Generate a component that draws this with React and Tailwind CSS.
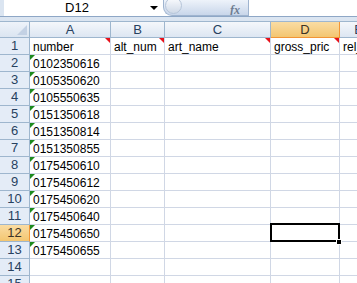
import React from 'react';

const cols = [
  { key: 'A', w: 'w-[81px]' },
  { key: 'B', w: 'w-[54px]' },
  { key: 'C', w: 'w-[106px]' },
  { key: 'D', w: 'w-[69px]' },
  { key: 'E', w: 'w-[38px]' },
  { key: 'F', w: 'w-[64px]' },
];

const numbers = [
  '0102350616', '0105350620', '0105550635', '0151350618', '0151350814', '0151350855',
  '0175450610', '0175450612', '0175450620', '0175450640', '0175450650', '0175450655',
];

const headerRow = { A: 'number', B: 'alt_num', C: 'art_name', D: 'gross_pric', E: 'rel_price' };

function GreenMark() {
  return <span className="absolute left-0 top-0 w-0 h-0 border-t-[5px] border-r-[5px] border-t-[#1d8a1d] border-r-transparent" />;
}

function RedMark() {
  return <span className="absolute right-0 top-0 w-0 h-0 border-t-[5px] border-l-[5px] border-t-[#e8101a] border-l-transparent" />;
}

function Cell({ col, row, children }) {
  const selected = col.key === 'D' && row === 12;
  return (
    <div className={`${col.w} relative shrink-0 h-full border-r border-[#d0d7e5]`}>
      <div className="h-full overflow-hidden whitespace-nowrap pl-[3px] text-[12px] leading-[16px] text-black pt-px">
        {children}
      </div>
      {selected && (
        <>
          <div className="absolute left-[-1px] top-[-2px] w-[70px] h-[19px] border-2 border-black z-10" />
          <div className="absolute left-[65px] top-[14px] w-[6px] h-[6px] bg-black border border-white z-20" />
        </>
      )}
    </div>
  );
}

export default function App() {
  const rows = Array.from({ length: 15 }, (_, i) => i + 1);

  return (
    <div className="w-[357px] h-[283px] overflow-hidden bg-white font-['Liberation_Sans',Arial,sans-serif]">
      {/* name box + formula bar */}
      <div className="flex h-[16px]">
        <div className="w-[4px] bg-[#dbe5f1] shrink-0" />
        <div className="w-[159px] shrink-0 bg-white flex items-center">
          <span className="flex-1 text-center text-[13px] leading-[16px] text-black">D12</span>
          <span className="w-0 h-0 mr-[5px] border-t-[4px] border-l-[4px] border-r-[4px] border-t-black border-l-transparent border-r-transparent" />
        </div>
        <div className="w-[85px] shrink-0 rounded-bl-[9px] bg-linear-to-b from-[#eef3fa] to-[#c8d6ea] border-b border-l border-[#9fb4cf] flex items-start overflow-hidden">
          <span className="ml-[1px] mt-[-3px] w-[17px] h-[17px] rounded-full bg-linear-to-b from-[#fbfcfe] to-[#cfd9e7] border border-[#b5c4d8]" />
          <span className="ml-auto mr-[8px] mt-[1px] text-[12px] italic font-bold font-['Liberation_Serif',serif] text-[#6e7d91]">fx</span>
        </div>
        <div className="flex-1 bg-white border-l border-[#9fb4cf]" />
      </div>
      <div className="h-px bg-[#8ea7c6]" />
      <div className="h-[4px] bg-[#dbe5f1]" />

      {/* column headers */}
      <div className="flex h-[17px] border-t border-[#9eb6ce]">
        <div className="w-[30px] shrink-0 relative bg-linear-to-b from-[#eef3fa] to-[#dbe5f1] border-r border-b border-[#9eb6ce]">
          <span className="absolute right-[2px] bottom-[2px] w-0 h-0 border-b-[10px] border-l-[10px] border-b-[#c3d1e4] border-l-transparent" />
        </div>
        {cols.map((c) => (
          <div
            key={c.key}
            className={`${c.w} shrink-0 flex items-center justify-center text-[13px] leading-[16px] border-r border-b ${
              c.key === 'D'
                ? 'bg-linear-to-b from-[#fadca3] to-[#f3c670] border-[#f29536] text-[#3b3226]'
                : 'bg-linear-to-b from-[#f4f7fb] to-[#dde6f2] border-[#9eb6ce] text-[#27415f]'
            }`}
          >
            {c.key}
          </div>
        ))}
      </div>

      {/* rows */}
      {rows.map((r) => (
        <div key={r} className="flex h-[17px] border-b border-[#d0d7e5]">
          <div
            className={`w-[30px] shrink-0 flex items-center justify-center text-[13px] leading-[16px] border-r ${
              r === 12
                ? 'bg-linear-to-b from-[#fadca3] to-[#f3c670] border-[#f29536] text-[#3b3226]'
                : 'bg-[#e4ecf7] border-[#9eb6ce] text-[#27415f]'
            } border-b border-b-[#9eb6ce] -mb-px`}
          >
            {r}
          </div>
          {cols.map((c) => (
            <Cell key={c.key} col={c} row={r}>
              {r === 1 && headerRow[c.key]}
              {r >= 2 && r <= 13 && c.key === 'A' && numbers[r - 2]}
              {r === 1 && ['A', 'B', 'C', 'D'].includes(c.key) && <RedMark />}
              {r >= 2 && r <= 13 && c.key === 'A' && <GreenMark />}
            </Cell>
          ))}
        </div>
      ))}
    </div>
  );
}
